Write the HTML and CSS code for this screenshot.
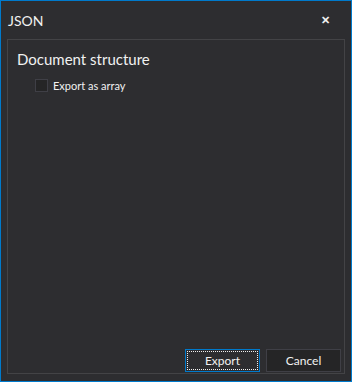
FILE: index.html
```html
<!DOCTYPE html>
<html lang="en">
<head>
  <meta charset="UTF-8" />
  <title>JSON</title>
  <link rel="stylesheet" href="styles.css">
</head>
<body>
  <div class="window">
    <div class="titlebar">
      <span class="title">JSON</span>
      <span class="close">&#x2715;</span>
    </div>
    <div class="panel">
      <h2>Document structure</h2>
      <label class="check"><span class="box"></span>Export as array</label>
      <div class="buttons">
        <button class="btn primary"><span class="focus">Export</span></button>
        <button class="btn">Cancel</button>
      </div>
    </div>
  </div>
</body>
</html>
```

FILE: styles.css
```css
* {
  box-sizing: border-box;
}

body {
  margin: 0;
  font-family: Lato, "Open Sans", sans-serif;
  background: #2d2d30;
}

.window {
  width: 352px;
  height: 382px;
  border: 1px solid #007acc;
  background: #2d2d30;
  color: #f1f1f1;
  display: flex;
  flex-direction: column;
}

.titlebar {
  height: 38px;
  display: flex;
  align-items: center;
  justify-content: space-between;
  padding: 0 21px 0 7px;
}

.title {
  font-size: 14px;
}

.close {
  font-size: 11px;
  font-weight: bold;
  color: #f1f1f1;
}

.panel {
  flex: 1;
  margin: 0 6px 7px 6px;
  border: 1px solid #434346;
  display: flex;
  flex-direction: column;
  padding: 0 3px 1px 9px;
}

h2 {
  margin: 10px 0 0 0;
  font-size: 15px;
  font-weight: normal;
}

.check {
  display: flex;
  align-items: center;
  font-size: 11px;
  margin: 11px 0 0 18px;
}

.box {
  width: 13px;
  height: 13px;
  border: 1px solid #3f3f46;
  background: #252526;
  margin-right: 5px;
}

.buttons {
  margin-top: auto;
  display: flex;
  justify-content: flex-end;
  gap: 6px;
}

.btn {
  width: 75px;
  height: 23px;
  border: 1px solid #3f3f46;
  background: #252526;
  color: #f1f1f1;
  font-family: inherit;
  font-size: 12px;
  padding: 0;
}

.btn.primary {
  border-color: #007acc;
  background: #2d2d30;
  padding: 1px;
}

.focus {
  display: block;
  height: 100%;
  border: 1px dotted #f1f1f1;
  line-height: 17px;
}
```
